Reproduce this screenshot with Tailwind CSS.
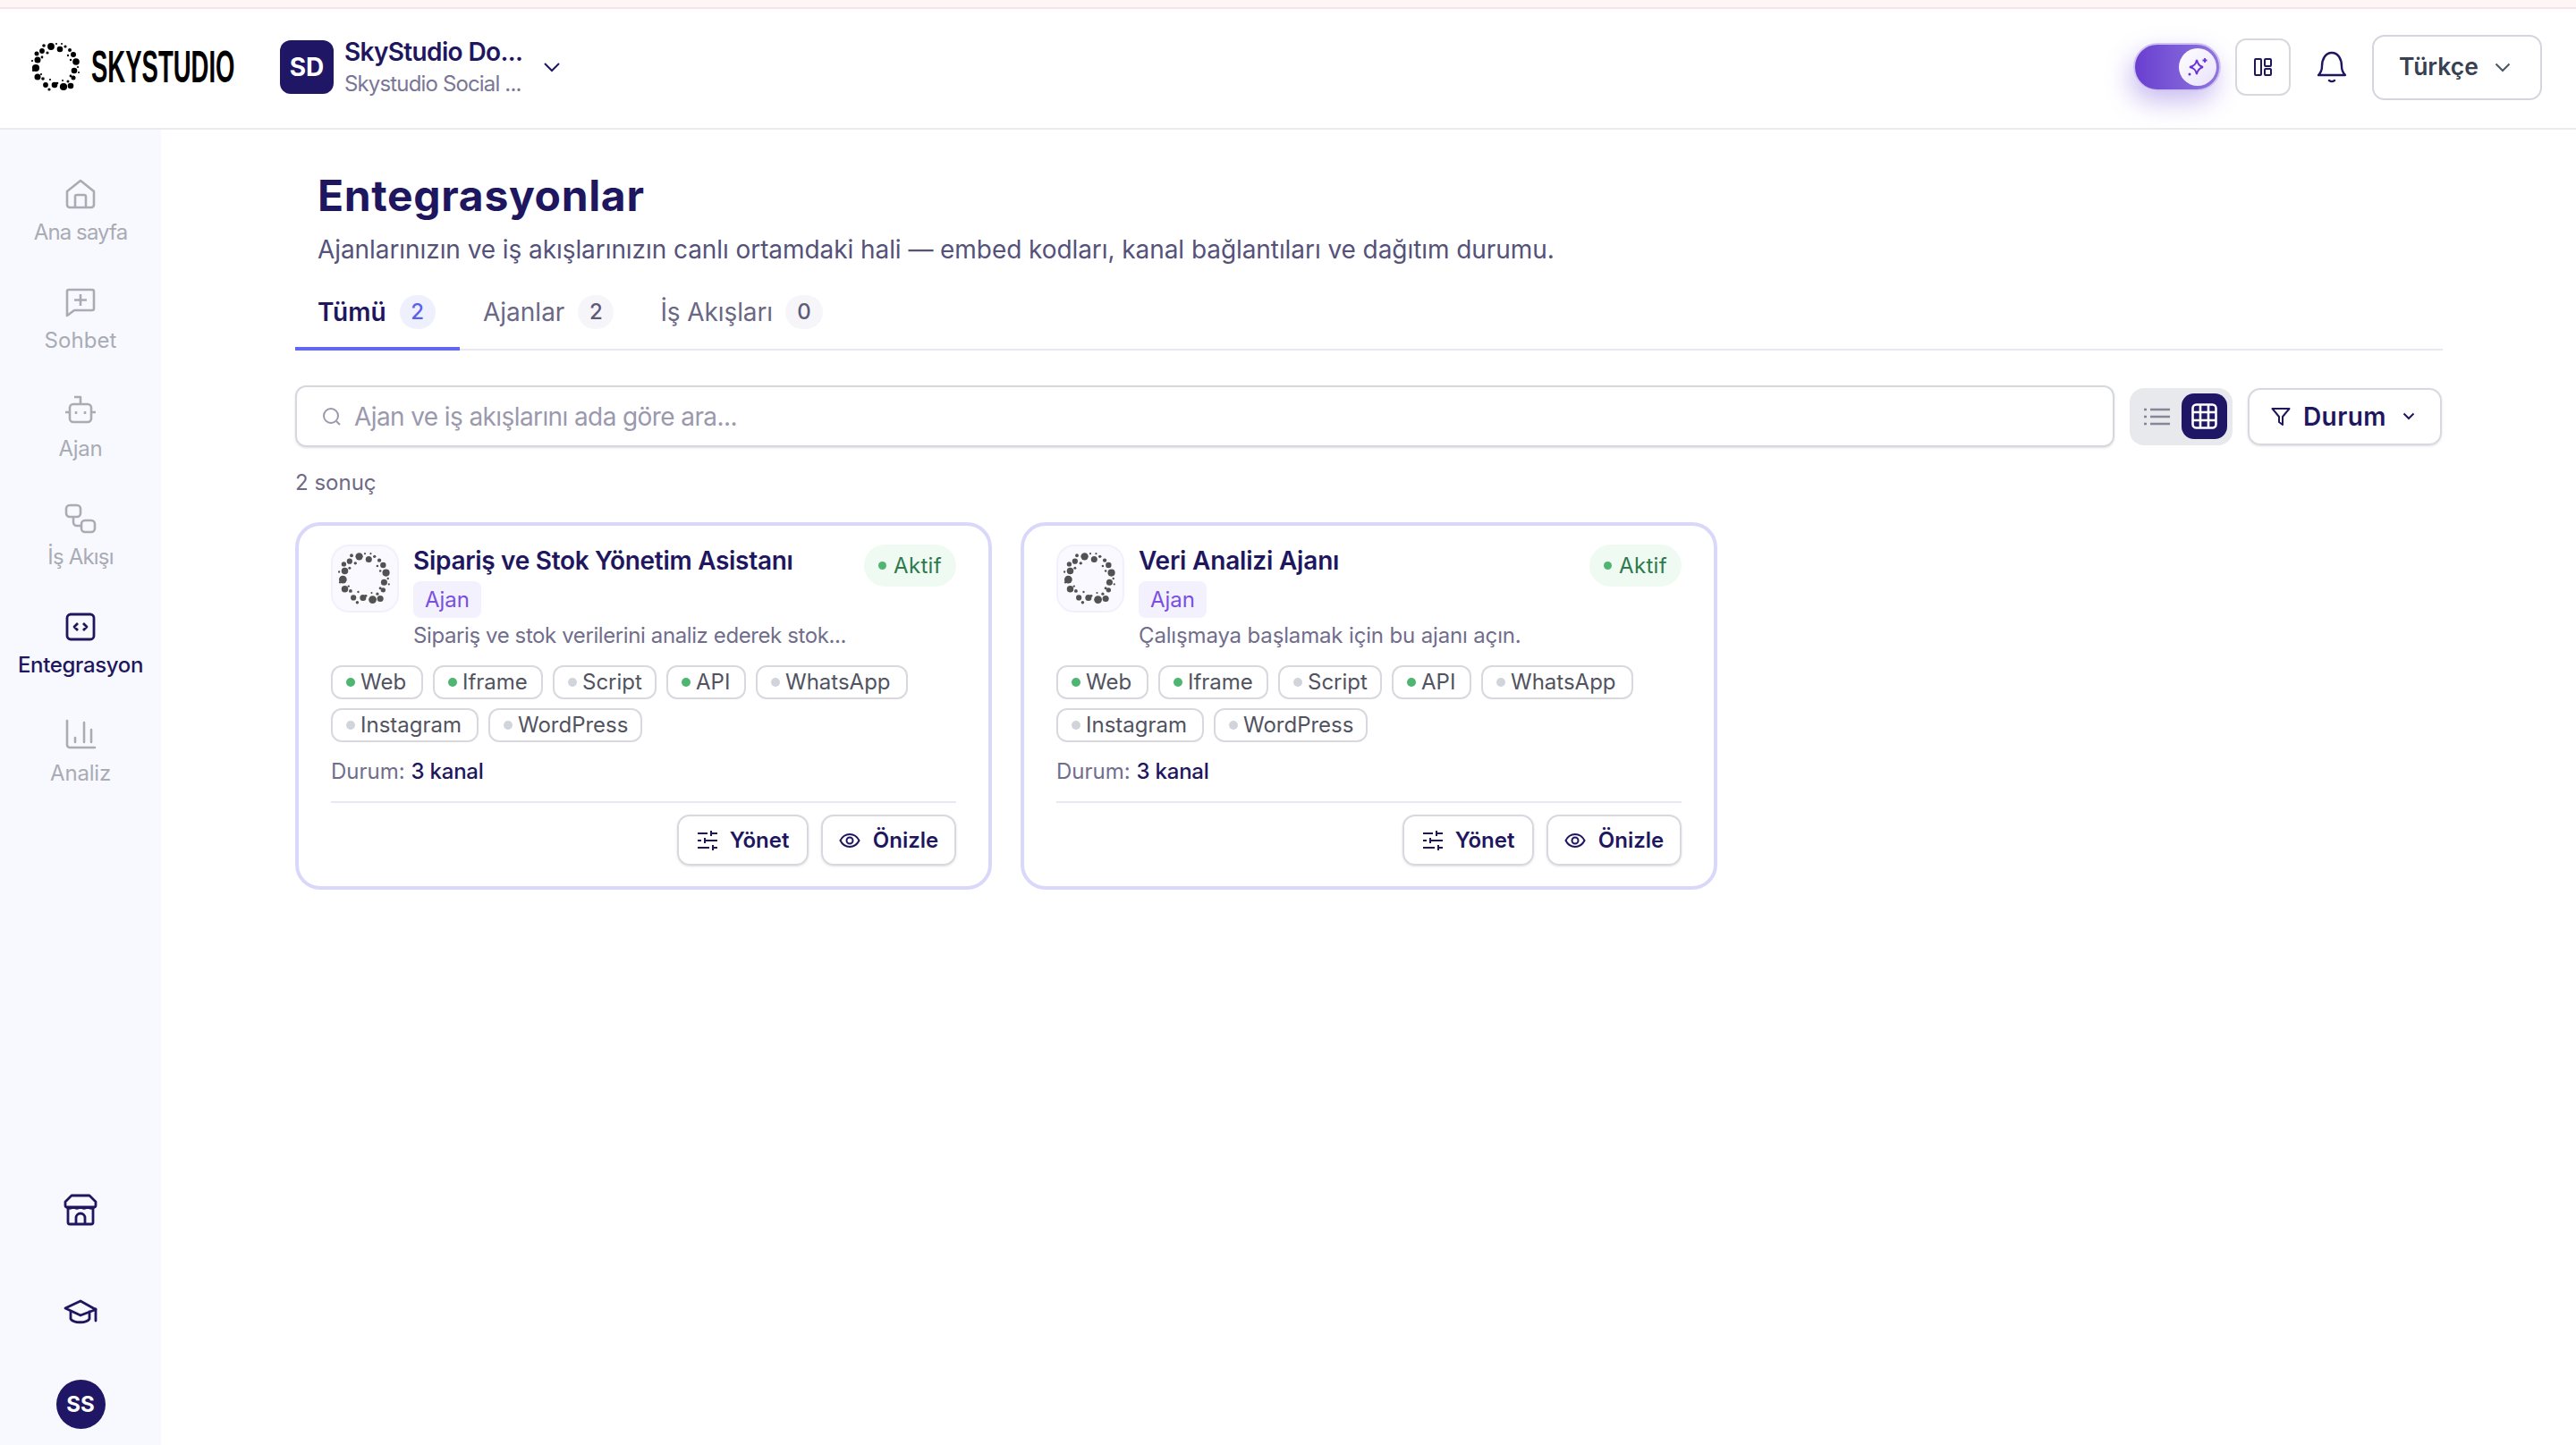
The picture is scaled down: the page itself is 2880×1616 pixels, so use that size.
<!DOCTYPE html>
<html lang="tr">
<head>
<meta charset="utf-8">
<script src="https://cdn.jsdelivr.net/npm/@tailwindcss/browser@4"></script>
<title>Entegrasyonlar</title>
</head>
<body class="bg-white font-['Inter',sans-serif] text-[#1e1760] w-[2880px] h-[1616px] overflow-hidden">
<svg class="hidden">
  <symbol id="logo" viewBox="0 0 56 56">
    <g fill="currentColor">
      <circle cx="22" cy="5" r="3.900"/><circle cx="32" cy="8" r="3.300"/><circle cx="38" cy="5" r="1.600"/><circle cx="34" cy="2" r="1"/><circle cx="28" cy="2" r="1"/><circle cx="43" cy="9" r="2"/><circle cx="47" cy="14" r="3"/><circle cx="41" cy="15" r="1.200"/><circle cx="44" cy="20" r="1.200"/><circle cx="50" cy="22" r="3.800"/><circle cx="52" cy="28" r="1.100"/><circle cx="48" cy="32" r="3.300"/><circle cx="44" cy="38" r="1.400"/><circle cx="47" cy="40" r="2.500"/><circle cx="53" cy="34" r="1"/><circle cx="41" cy="44" r="1.500"/><circle cx="44" cy="49" r="3.300"/><circle cx="36" cy="50" r="4.100"/><circle cx="35" cy="43" r="1"/><circle cx="29" cy="46" r="1.300"/><circle cx="26" cy="48" r="3.300"/><circle cx="20" cy="53" r="1.600"/><circle cx="16" cy="48" r="2.900"/><circle cx="21" cy="42" r="1.100"/><circle cx="13" cy="41" r="1.800"/><circle cx="7" cy="39" r="3.500"/><circle cx="2" cy="32" r="1.100"/><circle cx="5" cy="29" r="4.100"/><circle cx="11" cy="36" r="1.100"/><circle cx="7" cy="20" r="3.500"/><circle cx="1" cy="21" r="1.100"/><circle cx="12" cy="17" r="1.400"/><circle cx="6" cy="13" r="2.500"/><circle cx="12" cy="10" r="2.900"/><circle cx="18" cy="12" r="1.600"/><circle cx="14" cy="4" r="1.800"/>
    </g>
  </symbol>
  <symbol id="sliders" viewBox="0 0 24 24"><g fill="none" stroke="currentColor" stroke-width="2"><path d="M1 4h11M16 4h7M16 1v6M1 12h4M9 12h14M9 9v6M1 20h13M18 20h5M18 17v6"/></g></symbol>
  <symbol id="eye" viewBox="0 0 24 24"><g fill="none" stroke="currentColor" stroke-width="2"><path d="M1.500 12C4 7 8 5 12 5s8 2 10.500 7C20 17 16 19 12 19S4 17 1.500 12Z"/><circle cx="12" cy="12" r="3.500"/></g></symbol>
</svg>

<div class="h-[10px] bg-[#fef6f6] border-b-2 border-[#f6e3e6]"></div>

<header class="h-[135px] border-b-2 border-[#ebeaf2] flex items-center pl-[35px] pr-[38px] pb-[3px]">
  <div class="flex items-center w-[278px]">
    <svg class="w-[56px] h-[56px] text-black shrink-0"><use href="#logo"/></svg>
    <span class="ml-[11px] inline-block origin-left scale-x-[0.55] font-['Liberation_Sans',sans-serif] font-bold text-[50px] leading-none text-black whitespace-nowrap">SKYSTUDIO</span>
  </div>
  <div class="w-[60px] h-[60px] rounded-[12px] bg-[#1f1766] text-white font-bold text-[28px] flex items-center justify-center">SD</div>
  <div class="ml-[12px] w-[222px] flex flex-col gap-[2px] -mt-[1px]">
    <div class="text-[28px] leading-[36px] font-semibold tracking-[-0.65px] text-[#1e1760] whitespace-nowrap">SkyStudio Do...</div>
    <div class="text-[24px] leading-[32px] text-[#7a7696] tracking-[-0.85px] whitespace-nowrap">Skystudio Social ...</div>
  </div>
  <svg class="w-[20px] h-[12px] text-[#1e1760]" viewBox="0 0 20 12" fill="none" stroke="currentColor" stroke-width="2"><path d="M2 2l8 8 8-8"/></svg>

  <div class="ml-auto flex items-center">
    <div class="relative w-[98px] h-[54px] rounded-full bg-gradient-to-r from-[#6a3ed0] to-[#8f75dd] border-2 border-[#cfc3f2] shadow-[-4px_12px_28px_rgba(109,68,214,0.35)] flex items-center justify-end pr-[3px]">
      <div class="w-[42px] h-[42px] rounded-full bg-gradient-to-br from-white to-[#e9e1fb] flex items-center justify-center">
        <svg class="w-[24px] h-[24px] text-[#6a35d6]" viewBox="0 0 24 24" fill="none" stroke="currentColor" stroke-width="2"><path d="M11 4c1 5 3 7 7 8-4 1-6 3-7 8-1-5-3-7-8-8 5-1 7-3 8-8Z"/><path d="M20 2v5M17.500 4.500h5" stroke-width="1.800"/><circle cx="3" cy="20" r="1.500" fill="currentColor" stroke="none"/></svg>
      </div>
    </div>
    <div class="ml-[16px] w-[62px] h-[64px] rounded-[12px] border-2 border-[#d8d9df] flex items-center justify-center">
      <svg class="w-[20px] h-[20px] text-[#1e1760]" viewBox="0 0 20 20" fill="none" stroke="currentColor" stroke-width="2"><rect x="1" y="1" width="7" height="18" rx="1"/><rect x="12" y="1" width="7" height="8" rx="1"/><rect x="12" y="12" width="7" height="7" rx="1"/></svg>
    </div>
    <svg class="ml-[29px] w-[34px] h-[36px] text-[#1e1760]" viewBox="0 0 34 36" fill="none" stroke="currentColor" stroke-width="2.400" stroke-linecap="round" stroke-linejoin="round"><path d="M2 27c3-3 4-5 4-10 0-8 4-15 11-15s11 7 11 15c0 5 1 7 4 10Z"/><path d="M14 33c2 1.500 4 1.500 6 0"/></svg>
    <div class="ml-[28px] w-[190px] h-[73px] rounded-[14px] border-2 border-[#d3d6dc] flex items-center pl-[28px] gap-[19px]">
      <span class="w-[88px] text-[26.5px] font-semibold text-[#374151]">Türkçe</span>
      <svg class="w-[18px] h-[11px] text-[#4b5563]" viewBox="0 0 18 11" fill="none" stroke="currentColor" stroke-width="2"><path d="M1.500 1.500L9 9l7.500-7.500"/></svg>
    </div>
  </div>
</header>

<div class="flex h-[1471px]">
  <aside class="w-[180px] shrink-0 bg-[#f8f9fe] flex flex-col items-center pt-[54px] pb-[18px]">
    <nav class="flex flex-col gap-[25px] w-full items-center">
      <a class="h-[96px] flex flex-col items-center text-[#a9abb5]">
        <svg class="w-[36px] h-[36px]" viewBox="0 0 36 36" fill="none" stroke="currentColor" stroke-width="2.600" stroke-linejoin="round"><path d="M3 15L18 3l15 12v15a3 3 0 0 1-3 3H6a3 3 0 0 1-3-3Z"/><path d="M12 33V21a2 2 0 0 1 2-2h8a2 2 0 0 1 2 2v12"/></svg>
        <span class="mt-[9px] text-[24px] leading-[32px] tracking-[-0.9px] whitespace-nowrap">Ana sayfa</span>
      </a>
      <a class="h-[96px] flex flex-col items-center text-[#a9abb5]">
        <svg class="w-[36px] h-[36px]" viewBox="0 0 36 36" fill="none" stroke="currentColor" stroke-width="2.600" stroke-linejoin="round"><path d="M3 33V6a2 2 0 0 1 2-2h26a2 2 0 0 1 2 2v19a2 2 0 0 1-2 2H11Z"/><path d="M18 9v13M11 15.500h14"/></svg>
        <span class="mt-[9px] text-[24px] leading-[32px] tracking-[0.1px] whitespace-nowrap">Sohbet</span>
      </a>
      <a class="h-[96px] flex flex-col items-center text-[#a9abb5]">
        <svg class="w-[36px] h-[36px]" viewBox="0 0 36 36" fill="none" stroke="currentColor" stroke-width="2.600" stroke-linejoin="round"><path d="M11 3h7v8"/><rect x="6" y="11" width="24" height="20" rx="4"/><path d="M1 20h5M30 20h5"/><path d="M13 19v3M23 19v3"/></svg>
        <span class="mt-[9px] text-[24px] leading-[32px] tracking-[-0.3px] whitespace-nowrap">Ajan</span>
      </a>
      <a class="h-[96px] flex flex-col items-center text-[#a9abb5]">
        <svg class="w-[36px] h-[36px]" viewBox="0 0 36 36" fill="none" stroke="currentColor" stroke-width="2.600"><rect x="2" y="3" width="16" height="13" rx="4"/><rect x="19" y="20" width="15" height="13" rx="4"/><path d="M10 16v6a4 4 0 0 0 4 4h5"/></svg>
        <span class="mt-[9px] text-[24px] leading-[32px] tracking-[-0.8px] whitespace-nowrap">İş Akışı</span>
      </a>
      <a class="h-[96px] flex flex-col items-center text-[#1e1760]">
        <svg class="w-[36px] h-[36px]" viewBox="0 0 36 36" fill="none" stroke="currentColor" stroke-width="2.800" stroke-linejoin="round"><rect x="3" y="4" width="30" height="28" rx="4"/><path d="M15 14l-4 4 4 4M21 14l4 4-4 4"/></svg>
        <span class="mt-[9px] text-[24px] leading-[32px] font-medium tracking-[-0.35px] whitespace-nowrap">Entegrasyon</span>
      </a>
      <a class="h-[96px] flex flex-col items-center text-[#a9abb5]">
        <svg class="w-[36px] h-[36px]" viewBox="0 0 36 36" fill="none" stroke="currentColor" stroke-width="2.600" stroke-linecap="round"><path d="M3 2v27a3 3 0 0 0 3 3h28"/><path d="M12 21v5M22 4v22M30 12v14"/></svg>
        <span class="mt-[9px] text-[24px] leading-[32px] tracking-[-0.2px] whitespace-nowrap">Analiz</span>
      </a>
    </nav>
    <div class="mt-auto flex flex-col items-center text-[#1e1760]">
      <svg class="w-[38px] h-[36px]" viewBox="0 0 38 36" fill="none" stroke="currentColor" stroke-width="2.800" stroke-linejoin="round"><path d="M9 2h20l7 7v4a2 2 0 0 1-2 2H4a2 2 0 0 1-2-2V9Z"/><path d="M3 15c2.700 2.400 5.300 2.400 8 0 2.700 2.400 5.300 2.400 8 0 2.700 2.400 5.300 2.400 8 0 2.700 2.400 5.300 2.400 8 0" stroke-width="1.800"/><path d="M5 15v17a2 2 0 0 0 2 2h24a2 2 0 0 0 2-2V15"/><path d="M14 34v-7a5 5 0 0 1 10 0v7"/></svg>
      <svg class="mt-[82px] w-[38px] h-[30px]" viewBox="0 0 38 30" fill="none" stroke="currentColor" stroke-width="2.800" stroke-linejoin="round" stroke-linecap="round"><path d="M19 2L2 10l17 8 17-6.500Z"/><path d="M8 14v8c3 5 18 5 21 0v-8"/><path d="M36 11v13"/></svg>
      <div class="mt-[60px] w-[55px] h-[55px] rounded-full bg-[#1f1766] text-white font-bold text-[24px] flex items-center justify-center">SS</div>
    </div>
  </aside>

  <main class="flex-1 pl-[150px] pr-[149px]">
    <div class="pl-[25px]">
      <h1 class="mt-[45px] text-[48px] leading-[58px] font-bold tracking-[0.65px] text-[#1e1760] whitespace-nowrap">Entegrasyonlar</h1>
      <p class="mt-[13px] text-[28px] leading-[36px] text-[#55527a] tracking-[-0.07px] whitespace-nowrap">Ajanlarınızın ve iş akışlarınızın canlı ortamdaki hali — embed kodları, kanal bağlantıları ve dağıtım durumu.</p>
    </div>
    <div class="mt-[23px] h-[72px] flex border-b-2 border-[#e9e8f0]">
      <div class="w-[184px] h-[72px] border-b-4 border-[#6366f1] pl-[25px] pb-[11px] flex items-center gap-[15px]">
        <span class="text-[28px] font-semibold text-[#1e1760]">Tümü</span>
        <span class="w-[40px] h-[38px] rounded-full bg-[#eef0fe] text-[#5b5ff0] text-[24px] font-medium flex items-center justify-center">2</span>
      </div>
      <div class="ml-[26px] h-[72px] pb-[14px] flex items-center gap-[15px]">
        <span class="text-[28px] text-[#6b6885]">Ajanlar</span>
        <span class="w-[40px] h-[38px] rounded-full bg-[#f5f5fa] text-[#5d5a78] text-[24px] font-medium flex items-center justify-center">2</span>
      </div>
      <div class="ml-[52px] h-[72px] pb-[14px] flex items-center gap-[14px]">
        <span class="text-[28px] tracking-[-0.1px] text-[#6b6885]">İş Akışları</span>
        <span class="w-[42px] h-[38px] rounded-full bg-[#f5f5fa] text-[#5d5a78] text-[24px] font-medium flex items-center justify-center">0</span>
      </div>
    </div>

    <div class="mt-[39px] flex items-center">
      <div class="w-[2034px] h-[69px] rounded-[12px] border-2 border-[#d5d8de] shadow-sm flex items-center pl-[28px] gap-[14px]">
        <svg class="w-[22px] h-[22px] text-[#9b99ad]" viewBox="0 0 22 22" fill="none" stroke="currentColor" stroke-width="2"><circle cx="10" cy="10" r="8"/><path d="M16 16l4 4"/></svg>
        <span class="text-[28px] text-[#9b99ad] tracking-[-0.6px]">Ajan ve iş akışlarını ada göre ara...</span>
      </div>
      <div class="ml-[17px] w-[115px] h-[64px] rounded-[16px] bg-[#e8e9ec] flex items-center justify-end pr-[6px]">
        <div class="w-[58px] flex justify-center pl-[2px]">
          <svg class="w-[30px] h-[22px] text-[#878598]" viewBox="0 0 30 22" fill="none" stroke="currentColor" stroke-width="2.400"><path d="M1 3h3M1 11h3M1 19h3M8 3h22M8 11h22M8 19h22"/></svg>
        </div>
        <div class="w-[51px] h-[51px] rounded-[14px] bg-[#1f1766] flex items-center justify-center">
          <svg class="w-[29px] h-[29px] text-white" viewBox="0 0 29 29" fill="none" stroke="currentColor" stroke-width="2.600"><rect x="1.500" y="1.500" width="26" height="26" rx="4"/><path d="M10 2v25M19 2v25M2 10h25M2 19h25"/></svg>
        </div>
      </div>
      <div class="ml-[17px] w-[217px] h-[64px] rounded-[14px] border-2 border-[#d8d9e0] shadow-sm flex items-center pl-[24px]">
        <svg class="w-[22px] h-[22px] text-[#1e1760]" viewBox="0 0 22 22" fill="none" stroke="currentColor" stroke-width="2" stroke-linejoin="round"><path d="M1.500 2h19l-7.500 9v9l-4-3v-6Z"/></svg>
        <span class="ml-[14px] text-[28px] font-semibold text-[#1e1760] tracking-[0.4px]">Durum</span>
        <svg class="ml-[18px] w-[14px] h-[9px] text-[#1e1760]" viewBox="0 0 14 9" fill="none" stroke="currentColor" stroke-width="2"><path d="M1.500 1.500L7 7l5.500-5.500"/></svg>
      </div>
    </div>

    <div class="mt-[24px] h-[32px] text-[24px] leading-[32px] text-[#6e6a85]">2 sonuç</div>

    <div class="mt-[28px] grid grid-cols-3 gap-[32px]">
      <article class="h-[411px] rounded-[28px] border-4 border-[#d9d8fb] bg-white px-[36px] pt-[21px]">
        <div class="flex">
          <div class="w-[76px] h-[76px] shrink-0 rounded-[20px] bg-[#faf9ff] border-2 border-[#f2f0fc] flex items-center justify-center">
            <svg class="w-[60px] h-[60px] text-[#525252]"><use href="#logo"/></svg>
          </div>
          <div class="ml-[16px] flex-1 min-w-0">
            <div class="flex justify-between">
              <div>
                <div class="text-[28px] leading-[36px] font-semibold tracking-[-0.3px] text-[#1e1760] whitespace-nowrap">Sipariş ve Stok Yönetim Asistanı</div>
                <div class="mt-[5px] w-[76px] h-[41px] rounded-[8px] bg-[#f3f1fe] text-[#7a4fe0] text-[24px] flex items-center justify-center">Ajan</div>
              </div>
              <div class="h-[47px] w-[103px] rounded-full bg-[#effbf2] text-[#2d7a4d] text-[24px] tracking-[0.3px] flex items-center justify-center gap-[8px]">
                <span class="w-[9px] h-[9px] rounded-full bg-[#4fb573]"></span>Aktif
              </div>
            </div>
            <div class="mt-[4px] text-[24px] leading-[32px] text-[#716d8c] tracking-[-0.4px] whitespace-nowrap">Sipariş ve stok verilerini analiz ederek stok...</div>
          </div>
        </div>
        <div class="mt-[17px] flex flex-wrap gap-x-[11px] gap-y-[10px] text-[24px] text-[#51535f]">
          <span class="h-[38px] w-[103px] rounded-[12px] border-2 border-[#d8d8de] flex items-center pl-[15px] gap-[6px]"><i class="w-[10px] h-[10px] rounded-full bg-[#4fb573]"></i>Web</span>
          <span class="h-[38px] w-[123px] rounded-[12px] border-2 border-[#d8d8de] flex items-center pl-[15px] gap-[6px]"><i class="w-[10px] h-[10px] rounded-full bg-[#4fb573]"></i>Iframe</span>
          <span class="h-[38px] w-[116px] rounded-[12px] border-2 border-[#d8d8de] flex items-center pl-[15px] gap-[6px]"><i class="w-[10px] h-[10px] rounded-full bg-[#d1d5db]"></i>Script</span>
          <span class="h-[38px] w-[89px] rounded-[12px] border-2 border-[#d8d8de] flex items-center pl-[15px] gap-[6px]"><i class="w-[10px] h-[10px] rounded-full bg-[#4fb573]"></i>API</span>
          <span class="h-[38px] w-[170px] rounded-[12px] border-2 border-[#d8d8de] flex items-center pl-[15px] gap-[6px]"><i class="w-[10px] h-[10px] rounded-full bg-[#d1d5db]"></i>WhatsApp</span>
          <span class="h-[38px] w-[165px] rounded-[12px] border-2 border-[#d8d8de] flex items-center pl-[15px] gap-[6px]"><i class="w-[10px] h-[10px] rounded-full bg-[#d1d5db]"></i>Instagram</span>
          <span class="h-[38px] w-[172px] rounded-[12px] border-2 border-[#d8d8de] flex items-center pl-[15px] gap-[6px]"><i class="w-[10px] h-[10px] rounded-full bg-[#d1d5db]"></i>WordPress</span>
        </div>
        <div class="mt-[17px] text-[24px] leading-[32px] text-[#716d8c]">Durum: <span class="font-medium text-[#1e1760] tracking-[-0.2px]">3 kanal</span></div>
        <div class="mt-[17px] border-t-2 border-[#e9e8f2] pt-[13px] flex justify-end gap-[14px]">
          <button class="w-[147px] h-[57px] rounded-[14px] border-2 border-[#d8d8de] shadow-sm flex items-center justify-center gap-[13px] text-[24px] font-semibold text-[#1e1760]"><svg class="w-[24px] h-[24px]"><use href="#sliders"/></svg>Yönet</button>
          <button class="w-[151px] h-[57px] rounded-[14px] border-2 border-[#d8d8de] shadow-sm flex items-center justify-center gap-[14px] text-[24px] font-semibold text-[#1e1760]"><svg class="w-[24px] h-[24px]"><use href="#eye"/></svg>Önizle</button>
        </div>
      </article>

      <article class="h-[411px] rounded-[28px] border-4 border-[#d9d8fb] bg-white px-[36px] pt-[21px]">
        <div class="flex">
          <div class="w-[76px] h-[76px] shrink-0 rounded-[20px] bg-[#faf9ff] border-2 border-[#f2f0fc] flex items-center justify-center">
            <svg class="w-[60px] h-[60px] text-[#525252]"><use href="#logo"/></svg>
          </div>
          <div class="ml-[16px] flex-1 min-w-0">
            <div class="flex justify-between">
              <div>
                <div class="text-[28px] leading-[36px] font-semibold tracking-[-0.2px] text-[#1e1760] whitespace-nowrap">Veri Analizi Ajanı</div>
                <div class="mt-[5px] w-[76px] h-[41px] rounded-[8px] bg-[#f3f1fe] text-[#7a4fe0] text-[24px] flex items-center justify-center">Ajan</div>
              </div>
              <div class="h-[47px] w-[103px] rounded-full bg-[#effbf2] text-[#2d7a4d] text-[24px] tracking-[0.3px] flex items-center justify-center gap-[8px]">
                <span class="w-[9px] h-[9px] rounded-full bg-[#4fb573]"></span>Aktif
              </div>
            </div>
            <div class="mt-[4px] text-[24px] leading-[32px] text-[#716d8c] tracking-[-0.15px] whitespace-nowrap">Çalışmaya başlamak için bu ajanı açın.</div>
          </div>
        </div>
        <div class="mt-[17px] flex flex-wrap gap-x-[11px] gap-y-[10px] text-[24px] text-[#51535f]">
          <span class="h-[38px] w-[103px] rounded-[12px] border-2 border-[#d8d8de] flex items-center pl-[15px] gap-[6px]"><i class="w-[10px] h-[10px] rounded-full bg-[#4fb573]"></i>Web</span>
          <span class="h-[38px] w-[123px] rounded-[12px] border-2 border-[#d8d8de] flex items-center pl-[15px] gap-[6px]"><i class="w-[10px] h-[10px] rounded-full bg-[#4fb573]"></i>Iframe</span>
          <span class="h-[38px] w-[116px] rounded-[12px] border-2 border-[#d8d8de] flex items-center pl-[15px] gap-[6px]"><i class="w-[10px] h-[10px] rounded-full bg-[#d1d5db]"></i>Script</span>
          <span class="h-[38px] w-[89px] rounded-[12px] border-2 border-[#d8d8de] flex items-center pl-[15px] gap-[6px]"><i class="w-[10px] h-[10px] rounded-full bg-[#4fb573]"></i>API</span>
          <span class="h-[38px] w-[170px] rounded-[12px] border-2 border-[#d8d8de] flex items-center pl-[15px] gap-[6px]"><i class="w-[10px] h-[10px] rounded-full bg-[#d1d5db]"></i>WhatsApp</span>
          <span class="h-[38px] w-[165px] rounded-[12px] border-2 border-[#d8d8de] flex items-center pl-[15px] gap-[6px]"><i class="w-[10px] h-[10px] rounded-full bg-[#d1d5db]"></i>Instagram</span>
          <span class="h-[38px] w-[172px] rounded-[12px] border-2 border-[#d8d8de] flex items-center pl-[15px] gap-[6px]"><i class="w-[10px] h-[10px] rounded-full bg-[#d1d5db]"></i>WordPress</span>
        </div>
        <div class="mt-[17px] text-[24px] leading-[32px] text-[#716d8c]">Durum: <span class="font-medium text-[#1e1760] tracking-[-0.2px]">3 kanal</span></div>
        <div class="mt-[17px] border-t-2 border-[#e9e8f2] pt-[13px] flex justify-end gap-[14px]">
          <button class="w-[147px] h-[57px] rounded-[14px] border-2 border-[#d8d8de] shadow-sm flex items-center justify-center gap-[13px] text-[24px] font-semibold text-[#1e1760]"><svg class="w-[24px] h-[24px]"><use href="#sliders"/></svg>Yönet</button>
          <button class="w-[151px] h-[57px] rounded-[14px] border-2 border-[#d8d8de] shadow-sm flex items-center justify-center gap-[14px] text-[24px] font-semibold text-[#1e1760]"><svg class="w-[24px] h-[24px]"><use href="#eye"/></svg>Önizle</button>
        </div>
      </article>
    </div>
  </main>
</div>
</body>
</html>
